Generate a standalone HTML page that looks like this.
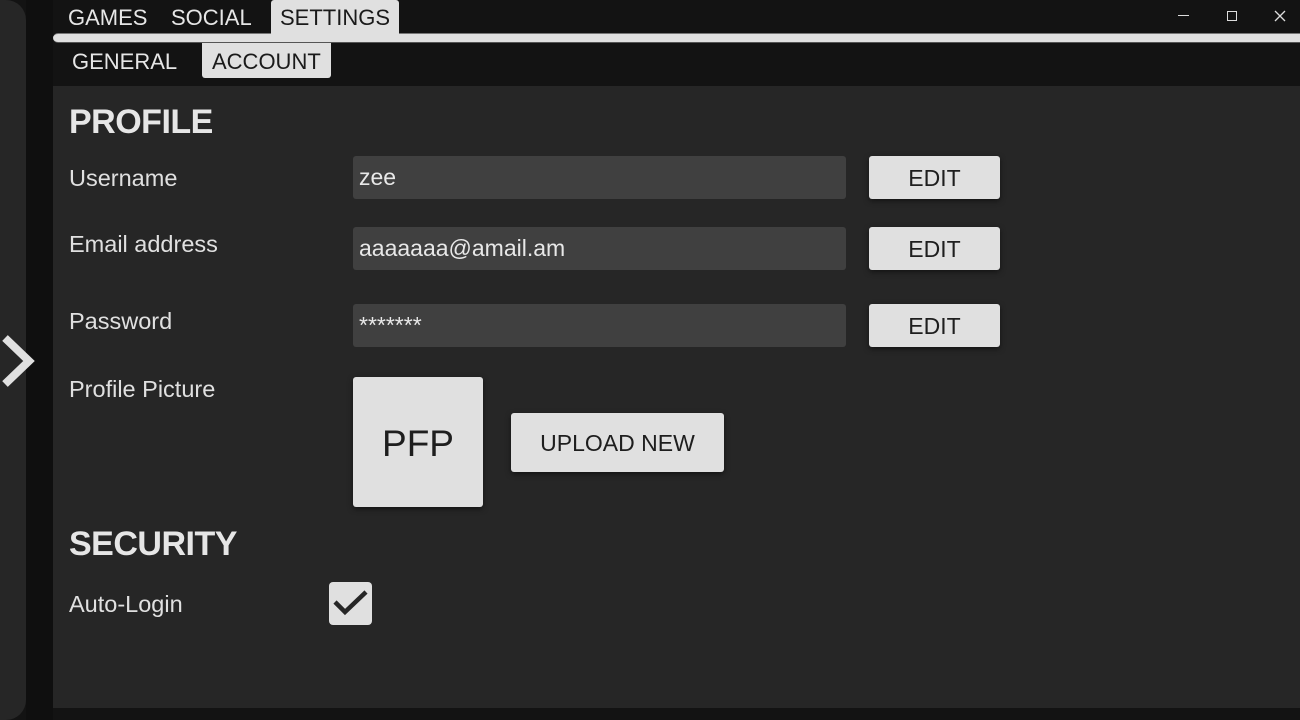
<!DOCTYPE html>
<html><head><meta charset="utf-8"><style>
*{margin:0;padding:0;box-sizing:border-box}
body{width:1300px;height:720px;background:#131313;position:relative;overflow:hidden;font-family:"Liberation Sans",sans-serif;color:#e0e0e0}
.a{position:absolute}
.strip{left:0;top:0;width:26px;height:720px;background:#262626;border-radius:0 20px 20px 0}
.shade{left:26px;top:0;width:27px;height:720px;background:#0f0f0f}
.tab{font-size:22px;color:#e6e6e6;white-space:nowrap}
.sel{background:#e0e0e0;color:#1a1a1a;border-radius:3px 3px 0 0}
.panel{left:53px;top:86px;width:1247px;height:622px;background:#262626}
.lbl{font-size:23.5px;color:#e0e0e0;left:69px}
.h{font-size:34px;font-weight:bold;left:69px;color:#e6e6e6;letter-spacing:-0.5px}
.field{left:353px;width:493px;height:43px;background:#404040;border-radius:3px;font-size:23px;padding-left:6px;line-height:43px;color:#e8e8e8}
.btn{left:869px;width:131px;height:43px;background:#e0e0e0;border-radius:3px;color:#1e1e1e;font-size:23px;text-align:center;line-height:45px;box-shadow:0 2px 6px rgba(0,0,0,.5)}
</style></head><body>
<div class="a strip"></div>
<div class="a shade"></div>
<svg class="a" style="left:0;top:330px" width="40" height="62"><polyline points="5,8 29,31 5,54" fill="none" stroke="#e0e0e0" stroke-width="8"/></svg>
<div class="a tab" style="left:68px;top:5px">GAMES</div>
<div class="a tab" style="left:171px;top:5px">SOCIAL</div>
<div class="a tab sel" style="left:271px;top:0;width:128px;height:34px;padding:5px 0 0 9px">SETTINGS</div>
<div class="a" style="left:53px;top:33px;width:1247px;height:10px;background:#e0e0e0;border-radius:5px 0 0 5px;border-top:1px solid #777;border-bottom:1px solid #555"></div>
<div class="a" style="left:271px;top:33px;width:128px;height:9px;background:#e0e0e0"></div>
<div class="a tab" style="left:72px;top:49px">GENERAL</div>
<div class="a tab" style="left:202px;top:43px;width:129px;height:35px;padding:6px 0 0 10px;background:#e0e0e0;color:#1a1a1a;border-radius:0 0 3px 3px">ACCOUNT</div>
<svg class="a" style="left:1170px;top:5px" width="125" height="22"><line x1="8" y1="10.5" x2="19" y2="10.5" stroke="#ddd" stroke-width="1"/><rect x="57.5" y="6.5" width="9" height="9" fill="none" stroke="#ddd"/><path d="M105 6L115 16M115 6L105 16" stroke="#ddd" stroke-width="1.3"/></svg>
<div class="a panel"></div>
<div class="a h" style="top:103px">PROFILE</div>
<div class="a lbl" style="top:165px">Username</div>
<div class="a lbl" style="top:231px">Email address</div>
<div class="a lbl" style="top:308px">Password</div>
<div class="a lbl" style="top:376px">Profile Picture</div>
<div class="a field" style="top:156px">zee</div>
<div class="a field" style="top:227px">aaaaaaa@amail.am</div>
<div class="a field" style="top:304px">*******</div>
<div class="a btn" style="top:156px">EDIT</div>
<div class="a btn" style="top:227px">EDIT</div>
<div class="a btn" style="top:304px">EDIT</div>
<div class="a btn" style="left:353px;top:377px;width:130px;height:130px;line-height:134px;font-size:37px">PFP</div>
<div class="a btn" style="left:511px;top:413px;width:213px;height:59px;line-height:61px;font-size:23px">UPLOAD NEW</div>
<div class="a h" style="top:525px">SECURITY</div>
<div class="a lbl" style="top:591px">Auto-Login</div>
<div class="a" style="left:329px;top:582px;width:43px;height:43px;background:#e0e0e0;border-radius:4px"></div>
<svg class="a" style="left:329px;top:582px" width="43" height="43"><polyline points="6,20 16,30 37,10" fill="none" stroke="#262626" stroke-width="4.5"/></svg>
</body></html>
